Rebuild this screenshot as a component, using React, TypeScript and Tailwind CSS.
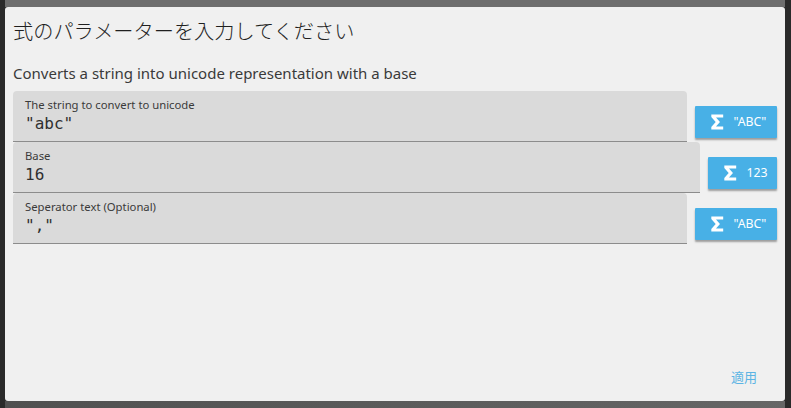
const BODY = "font-['Noto_Sans','Noto_Sans_CJK_JP',sans-serif]";

function Sigma() {
  return (
    <svg width="12.5" height="16" viewBox="0 0 12 15" className="shrink-0">
      <path d="M0.3 0.3H11.7V3.2H4.8L8.6 7.5L4.8 11.8H11.7V14.7H0.3V12.4L4.5 7.5L0.3 2.6Z" fill="#ffffff" />
    </svg>
  );
}

function Field({ label, value, kind, width }: { label: string; value: string; kind: string; width: string }) {
  return (
    <div className="flex items-end gap-2">
      <div className="flex-1 h-[51px] bg-[#dadada] rounded-t-[4px] border-b border-[#8c8c8c] pl-3 pt-[7px]">
        <div className="text-[11.3px] leading-[14px] text-[#3a3a3a]">{label}</div>
        <div className="font-['DejaVu_Sans_Mono',monospace] text-[16px] leading-[20px] mt-[2px] text-[#303030]">{value}</div>
      </div>
      <button className={`${width} h-8 mb-1 pl-4 flex items-center gap-[10px] bg-[#48b0e6] rounded-[1px] text-white text-[12.3px] whitespace-nowrap shadow-[0_2px_2px_rgba(0,0,0,0.35)]`}>
        <Sigma />
        <span>{kind}</span>
      </button>
    </div>
  );
}

export default function App() {
  return (
    <div className={`w-[791px] h-[408px] bg-[#2a2a2a] pl-[5px] pr-[6px] overflow-hidden ${BODY}`}>
      <div className="h-full flex flex-col">
        <div className="h-[7px] bg-[#6e6e6e]" />
        <div className="h-[394px] bg-[#f0f0f0] rounded-[3px] flex flex-col px-2 pt-[11px] pb-[14px]">
          <h1 className="font-['Noto_Sans_CJK_JP',sans-serif] font-light text-[20.2px] leading-[26px] text-[#1f1f1f]">
            式のパラメーターを入力してください
          </h1>
          <p className="mt-[19px] text-[15px] leading-[20px] text-[#3a3a3a]">
            Converts a string into unicode representation with a base
          </p>
          <div className="w-[764px] mt-[8px] flex flex-col">
            <Field label="The string to convert to unicode" value={'"abc"'} kind={'"ABC"'} width="w-[82px]" />
            <Field label="Base" value="16" kind="123" width="w-[69px]" />
            <Field label="Seperator text (Optional)" value={'","'} kind={'"ABC"'} width="w-[82px]" />
          </div>
          <div className="mt-auto flex justify-end pr-3">
            <button className="font-['Noto_Sans_CJK_JP',sans-serif] text-[13px] leading-[20px] text-[#5cb4e4] px-2">適用</button>
          </div>
        </div>
        <div className="flex-1 bg-gradient-to-r from-[#505050] to-[#666666]" />
      </div>
    </div>
  );
}
